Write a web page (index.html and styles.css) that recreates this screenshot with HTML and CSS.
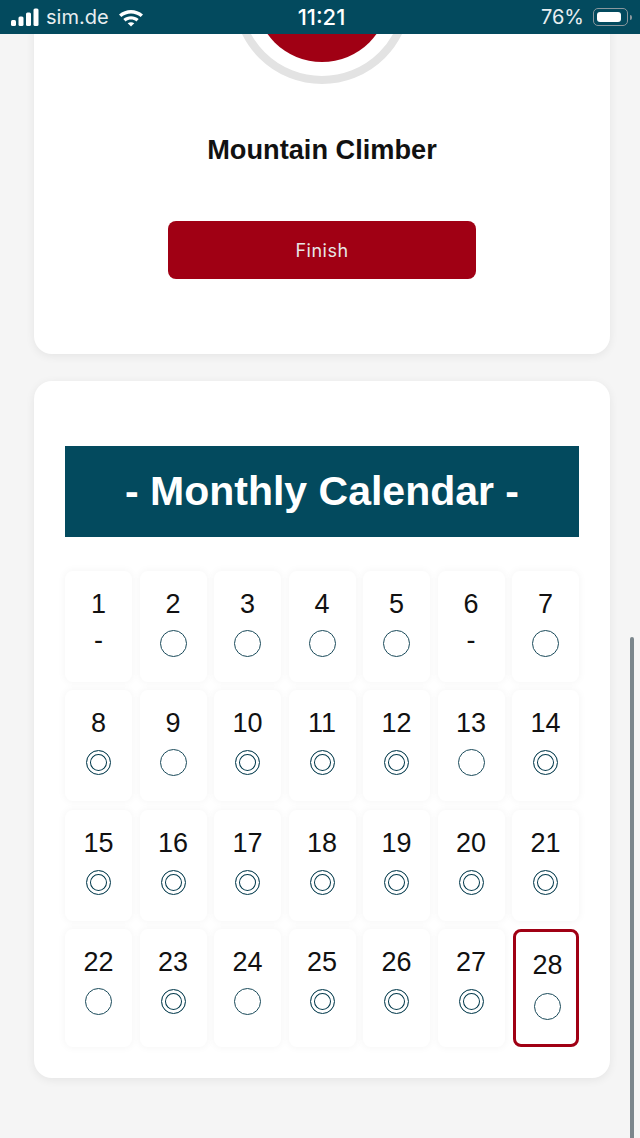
FILE: index.html
```html
<!DOCTYPE html>
<html>
<head>
<meta charset="utf-8">
<title>Monthly Calendar</title>
<link rel="stylesheet" href="styles.css">
</head>
<body>

<div class="status">
	<div class="status_left">
		<svg class="signal" width="29" height="19" viewBox="0 0 29 19">
			<rect x="0" y="12" width="5" height="6" rx="1.5"/>
			<rect x="7.5" y="8.5" width="5" height="9.5" rx="1.5"/>
			<rect x="15" y="4.5" width="5" height="13.5" rx="1.5"/>
			<rect x="22.500" y="0.5" width="5" height="17.5" rx="1.5"/>
		</svg>
		<span>sim.de</span>
		<svg class="wifi" width="26" height="19" viewBox="0 0 26 19">
			<path d="M1 6.500C7.800 .5 18.200 .5 25 6.500L22.700 9C17.200 4.300 8.800 4.300 3.300 9Z"/>
			<path d="M5.300 11C9.900 7.200 16.100 7.200 20.700 11L18.400 13.400C15.200 10.900 10.800 10.900 7.600 13.400Z"/>
			<path d="M9.700 15.300C11.700 13.900 14.300 13.900 16.300 15.300L13 18.500Z"/>
		</svg>
	</div>
	<div class="status_time">11:21</div>
	<div class="status_right">
		<span>76%</span>
		<div class="battery"><div class="battery_fill"></div></div>
		<div class="battery_tip"></div>
	</div>
</div>

<div class="screen">
	<div class="scrollbar"></div>

	<div class="card card_exercise">
		<div class="ring"><div class="ring_dot"></div></div>
		<h2 class="exercise_name">Mountain Climber</h2>
		<button class="finish">Finish</button>
	</div>

	<div class="card card_calendar">
		<h1 class="calendar_title">- Monthly Calendar -</h1>
		<div class="days">
			<div class="day"><span class="num">1</span><span class="dash">-</span></div>
			<div class="day"><span class="num">2</span><span class="mark"></span></div>
			<div class="day"><span class="num">3</span><span class="mark"></span></div>
			<div class="day"><span class="num">4</span><span class="mark"></span></div>
			<div class="day"><span class="num">5</span><span class="mark"></span></div>
			<div class="day"><span class="num">6</span><span class="dash">-</span></div>
			<div class="day"><span class="num">7</span><span class="mark"></span></div>

			<div class="day"><span class="num">8</span><span class="mark mark_done"></span></div>
			<div class="day"><span class="num">9</span><span class="mark"></span></div>
			<div class="day"><span class="num">10</span><span class="mark mark_done"></span></div>
			<div class="day"><span class="num">11</span><span class="mark mark_done"></span></div>
			<div class="day"><span class="num">12</span><span class="mark mark_done"></span></div>
			<div class="day"><span class="num">13</span><span class="mark"></span></div>
			<div class="day"><span class="num">14</span><span class="mark mark_done"></span></div>

			<div class="day"><span class="num">15</span><span class="mark mark_done"></span></div>
			<div class="day"><span class="num">16</span><span class="mark mark_done"></span></div>
			<div class="day"><span class="num">17</span><span class="mark mark_done"></span></div>
			<div class="day"><span class="num">18</span><span class="mark mark_done"></span></div>
			<div class="day"><span class="num">19</span><span class="mark mark_done"></span></div>
			<div class="day"><span class="num">20</span><span class="mark mark_done"></span></div>
			<div class="day"><span class="num">21</span><span class="mark mark_done"></span></div>

			<div class="day"><span class="num">22</span><span class="mark"></span></div>
			<div class="day"><span class="num">23</span><span class="mark mark_done"></span></div>
			<div class="day"><span class="num">24</span><span class="mark"></span></div>
			<div class="day"><span class="num">25</span><span class="mark mark_done"></span></div>
			<div class="day"><span class="num">26</span><span class="mark mark_done"></span></div>
			<div class="day"><span class="num">27</span><span class="mark mark_done"></span></div>
			<div class="day day_today"><span class="num">28</span><span class="mark"></span></div>
		</div>
	</div>
</div>

</body>
</html>
```

FILE: styles.css
```css
html {
	overflow: hidden;
}
body {
	margin: 0px;
	padding: 0px;
	height: 1138px;
	background: #f5f5f5;
	font-family: "Liberation Sans", Arial, sans-serif;
	color: #111;
	display: flex;
	flex-direction: column;
}
.status {
	height: 34px;
	flex: none;
	background: #034a5e;
	color: #e8eef0;
	font-family: "Inter", "Noto Sans", sans-serif;
	font-size: 20px;
	padding: 0px 8px 0px 11px;
	display: grid;
	grid-template-columns: 1fr auto 1fr;
	align-items: center;
	position: relative;
	z-index: 2;
}
.status_left {
	display: flex;
	align-items: center;
}
.status_left span {
	margin-left: 6px;
}
.signal {
	fill: #fff;
}
.wifi {
	fill: #fff;
	margin-left: 9px;
}
.status_time {
	font-size: 22px;
	font-weight: 500;
	color: #fff;
}
.status_right {
	display: flex;
	align-items: center;
	justify-content: flex-end;
}
.battery {
	width: 35px;
	height: 18px;
	box-sizing: border-box;
	margin-left: 9px;
	padding: 3px;
	border: 1px solid #8a979d;
	border-radius: 5px;
}
.battery_fill {
	width: 24px;
	height: 100%;
	background: #fff;
	border-radius: 3px;
}
.battery_tip {
	width: 2px;
	height: 5px;
	margin-left: 2px;
	background: #8a979d;
	border-radius: 0px 2px 2px 0px;
}
.screen {
	flex: 1;
	min-height: 0;
	overflow: hidden;
	position: relative;
	padding: 0px 30px 0px 34px;
}
.scrollbar {
	position: absolute;
	right: 6px;
	top: 603px;
	bottom: 0px;
	width: 4px;
	background: #7b868c;
	border-radius: 2px 2px 0px 0px;
}
.card {
	background: #fff;
	border-radius: 18px;
	box-shadow: 0px 2px 10px rgba(0, 0, 0, .07);
}
.card_exercise {
	height: 440px;
	margin-top: -120px;
	box-sizing: border-box;
	overflow: hidden;
	display: flex;
	flex-direction: column;
	align-items: center;
}
.ring {
	width: 178px;
	height: 178px;
	box-sizing: border-box;
	flex: none;
	margin-top: -8px;
	border: 8px solid #e3e3e3;
	border-radius: 50%;
	display: flex;
	align-items: center;
	justify-content: center;
}
.ring_dot {
	width: 134px;
	height: 134px;
	background: #a00014;
	border-radius: 50%;
}
.exercise_name {
	margin: 51px 0px 0px 0px;
	font-size: 27.2px;
	line-height: 30px;
	font-weight: bold;
}
.finish {
	width: 308px;
	height: 58px;
	margin: 56px 0px 0px 0px;
	background: #a00014;
	color: #e6e6e6;
	font-family: "Inter", "Noto Sans", sans-serif;
	font-size: 18px;
	letter-spacing: .5px;
	border: none;
	border-radius: 8px;
}
.card_calendar {
	margin-top: 27px;
	padding: 65px 31px 31px 31px;
}
.calendar_title {
	margin: 0px;
	height: 91px;
	background: #034a5e;
	color: #fff;
	font-size: 41px;
	line-height: 91px;
	font-weight: bold;
	text-align: center;
}
.days {
	margin-top: 34px;
	display: grid;
	grid-template-columns: repeat(7, 67px);
	justify-content: space-between;
	grid-auto-rows: minmax(111px, auto);
	row-gap: 8.4px;
}
.day {
	box-sizing: border-box;
	padding-top: 19px;
	background: #fff;
	border-radius: 8px;
	box-shadow: 0px 0px 8px rgba(0, 0, 0, .05);
	display: flex;
	flex-direction: column;
	align-items: center;
	font-size: 27px;
}
.num {
	line-height: 28px;
}
.dash {
	line-height: 28px;
	margin-top: 8px;
}
.mark {
	width: 27px;
	height: 27px;
	box-sizing: border-box;
	margin-top: 12px;
	border: 1px solid #1a4a5a;
	border-radius: 50%;
}
.mark_done {
	width: 25px;
	height: 25px;
	margin-top: 13px;
	border: 1px solid #033a4c;
	background: #fff;
	box-shadow: inset 0px 0px 0px 3px #fff, inset 0px 0px 0px 4px #033a4c;
}
.day_today {
	margin-left: 1px;
	padding: 19px 0px 24px 3px;
	border: 3px solid #a00014;
	box-shadow: none;
}
.day_today .mark {
	margin-top: 14px;
}
```
